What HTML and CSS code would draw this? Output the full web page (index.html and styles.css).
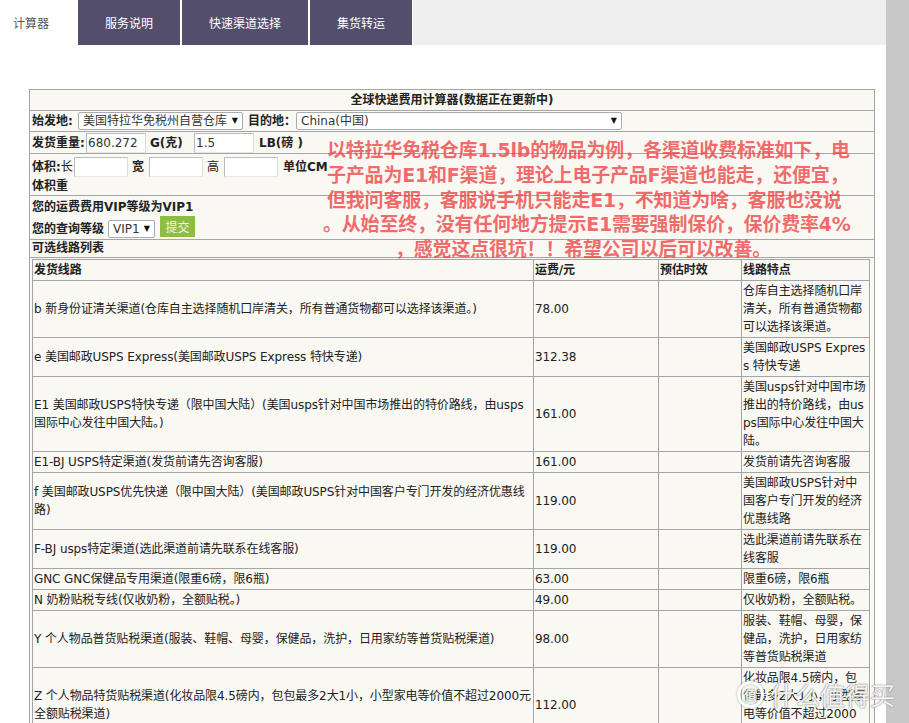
FILE: index.html
```html
<!DOCTYPE html>
<html lang="zh-CN">
<head>
<meta charset="utf-8">
<title>全球快递费用计算器</title>
<link rel="stylesheet" href="styles.css">
</head>
<body>
<div class="page">
  <div class="main">
    <nav class="tabs">
      <a class="tab tab-active">计算器</a>
      <a class="tab tab-service">服务说明</a>
      <a class="tab tab-fast">快速渠道选择</a>
      <a class="tab tab-consol">集货转运</a>
      <div class="tab-fill"></div>
    </nav>

    <div class="calc">
      <div class="row r-title">全球快递费用计算器(数据正在更新中)</div>

      <div class="row r-from">
        <b class="lbl lbl-from">始发地:</b>
        <span class="sel sel-from">美国特拉华免税州自营仓库<i class="arr">▼</i></span>
        <b class="lbl lbl-to">目的地：</b>
        <span class="sel sel-to">China(中国)<i class="arr">▼</i></span>
      </div>

      <div class="row r-weight">
        <b class="lbl lbl-weight">发货重量:</b>
        <span class="inp inp-w">680.272</span>
        <b class="lbl lbl-g">G(克)</b>
        <span class="inp inp-w">1.5</span>
        <b class="lbl lbl-lb">LB(磅 )</b>
      </div>

      <div class="row r-volume">
        <div class="vol-line">
          <span class="lbl lbl-len"><b>体积:</b>长</span>
          <span class="inp inp-v"></span>
          <b class="lbl lbl-w">宽</b>
          <span class="inp inp-v"></span>
          <span class="lbl lbl-h">高</span>
          <span class="inp inp-v"></span>
          <b class="lbl lbl-cm">单位CM</b>
        </div>
        <div class="vol-line2"><b>体积重</b></div>
      </div>

      <div class="row r-vip">
        <div class="vip-line1"><b>您的运费费用VIP等级为VIP1</b></div>
        <div class="vip-line2">
          <b class="lbl lbl-level">您的查询等级</b>
          <span class="sel sel-vip">VIP1<i class="arr">▼</i></span>
          <button class="btn-submit" type="button">提交</button>
        </div>
      </div>

      <div class="row r-list"><b>可选线路列表</b></div>

      <div class="row r-table">
        <table class="routes">
          <colgroup>
            <col class="c-route">
            <col class="c-fee">
            <col class="c-time">
            <col class="c-feat">
          </colgroup>
          <thead>
            <tr><th>发货线路</th><th>运费/元</th><th>预估时效</th><th>线路特点</th></tr>
          </thead>
          <tbody>
            <tr><td>b 新身份证清关渠道(仓库自主选择随机口岸清关，所有普通货物都可以选择该渠道。)</td><td>78.00</td><td></td><td>仓库自主选择随机口岸清关，所有普通货物都可以选择该渠道。</td></tr>
            <tr><td>e 美国邮政USPS Express(美国邮政USPS Express 特快专递)</td><td>312.38</td><td></td><td>美国邮政USPS Express 特快专递</td></tr>
            <tr><td>E1 美国邮政USPS特快专递（限中国大陆）(美国usps针对中国市场推出的特价路线，由usps国际中心发往中国大陆。)</td><td>161.00</td><td></td><td>美国usps针对中国市场推出的特价路线，由usps国际中心发往中国大陆。</td></tr>
            <tr><td>E1-BJ USPS特定渠道(发货前请先咨询客服)</td><td>161.00</td><td></td><td>发货前请先咨询客服</td></tr>
            <tr><td>f 美国邮政USPS优先快递（限中国大陆）(美国邮政USPS针对中国客户专门开发的经济优惠线路)</td><td>119.00</td><td></td><td>美国邮政USPS针对中国客户专门开发的经济优惠线路</td></tr>
            <tr><td>F-BJ usps特定渠道(选此渠道前请先联系在线客服)</td><td>119.00</td><td></td><td>选此渠道前请先联系在线客服</td></tr>
            <tr><td>GNC GNC保健品专用渠道(限重6磅，限6瓶)</td><td>63.00</td><td></td><td>限重6磅，限6瓶</td></tr>
            <tr><td>N 奶粉贴税专线(仅收奶粉，全额贴税。)</td><td>49.00</td><td></td><td>仅收奶粉，全额贴税。</td></tr>
            <tr><td>Y 个人物品普货贴税渠道(服装、鞋帽、母婴，保健品，洗护，日用家纺等普货贴税渠道)</td><td>98.00</td><td></td><td>服装、鞋帽、母婴，保健品，洗护，日用家纺等普货贴税渠道</td></tr>
            <tr><td>Z 个人物品特货贴税渠道(化妆品限4.5磅内，包包最多2大1小，小型家电等价值不超过2000元全额贴税渠道)</td><td>112.00</td><td></td><td>化妆品限4.5磅内，包包最多2大1小，小型家电等价值不超过2000元全额贴税渠道</td></tr>
          </tbody>
        </table>
      </div>
    </div>
  </div>
  <div class="scrollbar"></div>

  <div class="note">
    <div>以特拉华免税仓库1.5lb的物品为例，各渠道收费标准如下，电</div>
    <div>子产品为E1和F渠道，理论上电子产品F渠道也能走，还便宜，</div>
    <div>但我问客服，客服说手机只能走E1，不知道为啥，客服也没说</div>
    <div class="note-shift">。从始至终，没有任何地方提示E1需要强制保价，保价费率4%</div>
    <div class="note-last">，感觉这点很坑！！希望公司以后可以改善。</div>
  </div>

  <div class="wm">
    <span class="wm-icon">值</span>
    <span class="wm-text">什么值得买</span>
  </div>
</div>
</body>
</html>
```

FILE: styles.css
```css
* { box-sizing: border-box; }

html, body {
  margin: 0;
  padding: 0;
  height: 723px;
  overflow: hidden;
  background: #ffffff;
}

body {
  font-family: "DejaVu Sans", "Noto Sans CJK SC", sans-serif;
  font-size: 12px;
  color: #222;
}

.page {
  position: relative;
  display: flex;
  width: 909px;
  height: 723px;
  overflow: hidden;
}

.main {
  width: 886px;
  flex: none;
}

.scrollbar {
  width: 23px;
  flex: none;
  background: #c8c8c8;
}

/* ---------- tabs ---------- */
.tabs {
  display: flex;
  height: 45px;
}

.tab {
  display: flex;
  align-items: center;
  justify-content: center;
  height: 45px;
  color: #fff;
  background: #534e6b;
  font-family: "Noto Sans CJK SC", sans-serif;
  font-size: 12px;
  flex: none;
}

.tab-active {
  width: 78px;
  background: #fff;
  color: #555;
  justify-content: flex-start;
  padding-left: 13px;
}

.tab-service { width: 102px; }
.tab-fast { width: 126px; margin-left: 2px; }
.tab-consol { width: 102px; margin-left: 2px; }

.tab-fill {
  flex: 1;
  background: #eeeeee;
  margin-left: 1px;
}

/* ---------- calculator ---------- */
.calc {
  margin: 44px 0 0 29px;
  width: 846px;
  border: 1px solid #a5a5a5;
  background: #f9f8f3;
}

.row + .row { border-top: 1px solid #a5a5a5; }

.r-title {
  height: 20px;
  line-height: 20px;
  text-align: center;
  font-weight: bold;
}

.r-from, .r-weight {
  display: flex;
  align-items: center;
  padding-left: 2px;
}

.r-from { height: 21px; }
.r-weight { height: 22px; }

.lbl { flex: none; white-space: nowrap; line-height: 18px; }
.lbl-from { width: 46px; }
.lbl-to { width: 48px; margin-left: 5px; }
.lbl-weight { width: 54px; }
.lbl-g { width: 44px; margin-left: 4px; }
.lbl-lb { margin-left: 5px; }
.lbl-len { width: 42px; }
.lbl-w { width: 17px; margin-left: 4px; }
.lbl-h { width: 17px; margin-left: 4px; }
.lbl-cm { margin-left: 5px; }
.lbl-level { width: 76px; }

.sel {
  position: relative;
  flex: none;
  height: 18px;
  line-height: 16px;
  padding-left: 4px;
  background: #fff;
  border: 1px solid #a9adb3;
  border-radius: 2px;
  color: #333;
  white-space: nowrap;
}

.arr {
  position: absolute;
  right: 4px;
  top: 0;
  font-style: normal;
  font-size: 8px;
  color: #111;
}

.sel-from { width: 165px; }
.sel-to { width: 326px; }
.sel-vip { width: 47px; }

.inp {
  flex: none;
  height: 20px;
  line-height: 18px;
  padding-left: 1px;
  background: #fff;
  border: 1px solid #b8bcc2;
  border-right-color: #dcdcdc;
  border-bottom-color: #e6e6e6;
  color: #333;
}

.inp-w { width: 60px; }
.inp-v { width: 54px; }

.r-volume {
  height: 42px;
  padding: 3px 0 0 2px;
}

.vol-line {
  display: flex;
  align-items: center;
  height: 20px;
}

.vol-line2 {
  line-height: 16px;
  height: 16px;
  margin-top: 1px;
}

.r-vip {
  height: 44px;
  padding: 2px 0 0 2px;
}

.vip-line1 { line-height: 18px; height: 18px; }

.vip-line2 {
  display: flex;
  align-items: flex-end;
  height: 22px;
}

.btn-submit {
  flex: none;
  width: 35px;
  height: 21px;
  margin: 0 0 1px 5px;
  padding: 0;
  border: none;
  background: #8dbd45;
  color: #eef6e2;
  font-family: "Noto Sans CJK SC", sans-serif;
  font-size: 12px;
  line-height: 21px;
}

.r-list {
  height: 18px;
  line-height: 17px;
  padding-left: 2px;
}

.r-table {
  padding: 1px 0 0 2px;
}

/* ---------- routes table ---------- */
.routes {
  width: 837px;
  table-layout: fixed;
  border-collapse: collapse;
  border: 1px solid #a5a5a5;
  background: #f9f8f3;
}

.c-route { width: 501px; }
.c-fee { width: 125px; }
.c-time { width: 83px; }
.c-feat { width: 128px; }

.routes th,
.routes td {
  border: 1px solid #a5a5a5;
  padding: 1px 1px;
  line-height: 18px;
  text-align: left;
  vertical-align: middle;
  word-break: break-all;
  font-size: 12px;
  letter-spacing: -0.1px;
}

.routes th { font-weight: bold; }

/* ---------- annotation overlay ---------- */
.note {
  position: absolute;
  left: 327px;
  top: 138px;
  font-family: "DejaVu Sans", "Noto Sans CJK SC", sans-serif;
  font-weight: bold;
  font-size: 19px;
  line-height: 24.8px;
  letter-spacing: -0.2px;
  color: rgba(238, 60, 60, 0.76);
  white-space: nowrap;
}

.note-shift { margin-left: -4px; }
.note-last { margin-left: 68px; }

/* ---------- watermark ---------- */
.wm {
  position: absolute;
  left: 737px;
  top: 679px;
  display: flex;
  align-items: center;
  gap: 6px;
  font-family: "Noto Sans CJK SC", sans-serif;
  color: rgba(255, 255, 255, 0.93);
  text-shadow: 0 0 1px #777, 0 0 2px #999;
}

.wm-icon {
  display: flex;
  align-items: center;
  justify-content: center;
  width: 27px;
  height: 27px;
  border: 3px solid rgba(255, 255, 255, 0.93);
  border-radius: 50%;
  box-shadow: 0 0 2px #888, inset 0 0 2px #888;
  font-size: 12px;
  font-weight: bold;
}

.wm-text {
  font-size: 25px;
  line-height: 30px;
}
```
